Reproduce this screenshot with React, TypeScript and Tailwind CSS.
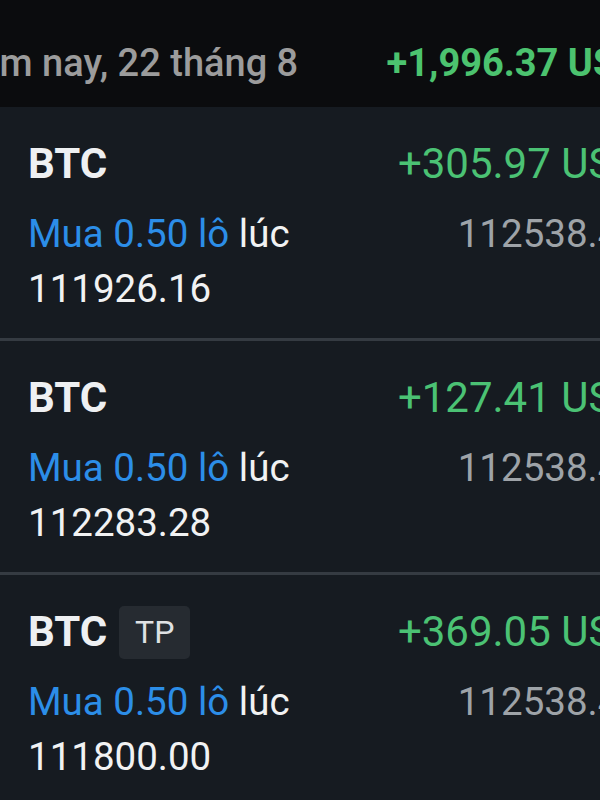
import React from 'react';

interface Trade {
  symbol: string;
  badge?: string;
  profit: string;
  lots: string;
  openPrice: string;
  currentPrice: string;
}

const trades: Trade[] = [
  { symbol: 'BTC', profit: '+305.97 USD', lots: '0.50', openPrice: '111926.16', currentPrice: '112538.46' },
  { symbol: 'BTC', profit: '+127.41 USD', lots: '0.50', openPrice: '112283.28', currentPrice: '112538.46' },
  { symbol: 'BTC', badge: 'TP', profit: '+369.05 USD', lots: '0.50', openPrice: '111800.00', currentPrice: '112538.46' },
];

const TradeRow: React.FC<{ trade: Trade }> = ({ trade }) => {
  return (
    <div className="flex justify-between border-b-[3px] border-[#353b42] pl-[28px] pt-[30px] h-[234px]">
      <div className="w-[360px]">
        <div className="flex items-center gap-[12px] h-[54px]">
          <span className="text-[42px] font-bold text-[#eef0f2] leading-none">{trade.symbol}</span>
          {trade.badge && (
            <span className="rounded-[5px] bg-[#262b31] w-[71px] h-[53px] flex items-center justify-center text-[32px] text-[#dfe1e3] leading-none">
              {trade.badge}
            </span>
          )}
        </div>
        <p className="mt-[15px] text-[38.5px] leading-[55px] text-[#f1f2f3]">
          <span className="text-[#2c8ee8]">Mua {trade.lots} lô</span> lúc {trade.openPrice}
        </p>
      </div>
      <div className="flex flex-col items-end">
        <div className="h-[54px] flex items-center text-[42px] text-[#4bc274] leading-none">{trade.profit}</div>
        <div className="mt-[15px] text-[38.5px] leading-[55px] text-[#9ea3a8]">{trade.currentPrice}</div>
      </div>
    </div>
  );
};

const App: React.FC = () => {
  return (
    <div
      className="w-[600px] h-[800px] overflow-hidden bg-[#161b21]"
      style={{ fontFamily: 'Roboto, "Noto Sans", sans-serif' }}
    >
      <div className="w-[641px]">
        <header className="h-[107px] bg-[#0b0c0e] flex items-center justify-between pt-[20px]">
          <span className="ml-[-49px] text-[38px] font-medium text-[#9c9c9c] whitespace-nowrap">Hôm nay, 22 tháng 8</span>
          <span className="text-[38px] font-bold text-[#4cc36f] whitespace-nowrap">+1,996.37 USD</span>
        </header>
        {trades.map((t, i) => (
          <TradeRow key={i} trade={t} />
        ))}
      </div>
    </div>
  );
};

export default App;
